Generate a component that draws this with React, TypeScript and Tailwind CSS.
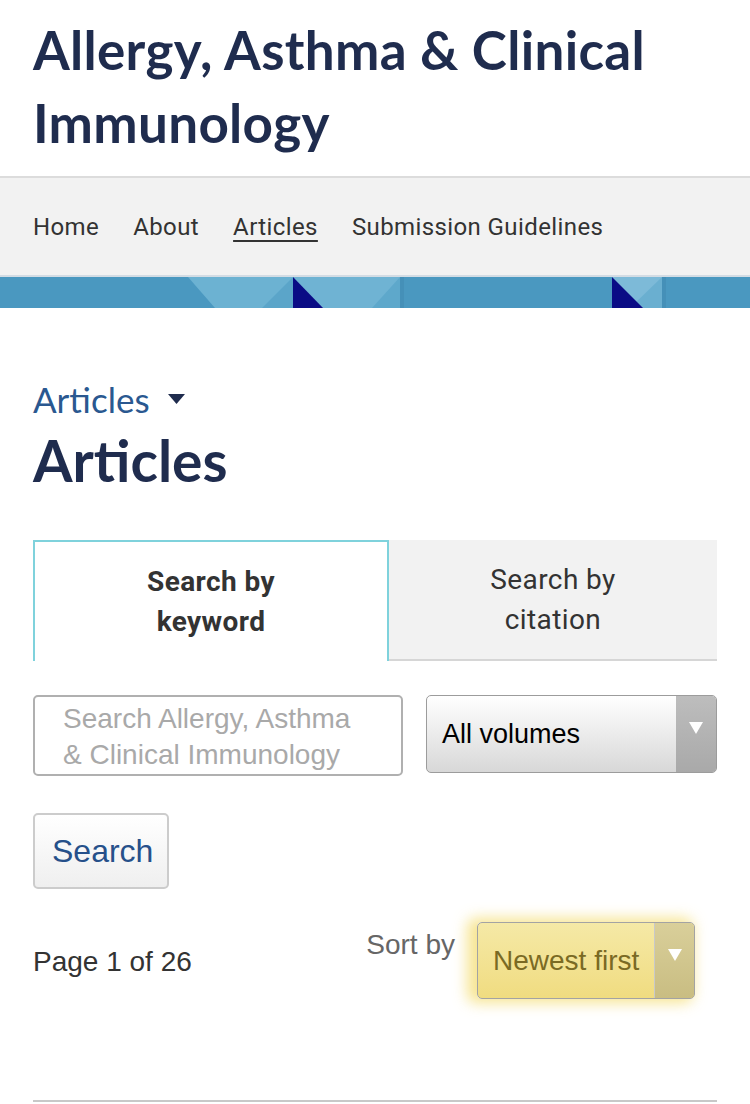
import { useState } from "react";

const navLinks = ["Home", "About", "Articles", "Submission Guidelines"];

// decorative stripe under the nav
const Stripe = () => (
    <svg className="block w-full h-[31px]" viewBox="0 0 750 31" preserveAspectRatio="none">
        <rect x="0" y="0" width="750" height="31" fill="#4a98c0" />
        <polygon points="188,0 293,0 293,31 215,31" fill="#6cb2d2" />
        <polygon points="262,31 293,0 293,31" fill="#5ba5c9" />
        <polygon points="293,0 400,0 400,31 293,31" fill="#6fb3d3" />
        <polygon points="400,0 400,31 372,31" fill="#5ea8cb" />
        <rect x="400" y="0" width="4" height="31" fill="#4590b8" />
        <polygon points="293,0 323,31 293,31" fill="#0a0c85" />
        <polygon points="612,0 662,0 662,31 612,31" fill="#7dbad8" />
        <polygon points="662,0 662,31 630,31" fill="#6aafd0" />
        <rect x="662" y="0" width="4" height="31" fill="#4590b8" />
        <polygon points="612,0 643,31 612,31" fill="#0a0c85" />
    </svg>
);

const SelectBox = ({ label, highlighted }: { label: string; highlighted?: boolean }) => (
    <div
        className={
            highlighted
                ? "relative flex items-stretch h-[77px] w-[218px] rounded-[5px] border border-[#a3a3a3] bg-gradient-to-b from-[#f5e9a6] to-[#f0dc80] shadow-[-6px_0_14px_4px_rgba(245,222,120,0.8)] overflow-hidden"
                : "relative flex items-stretch h-[78px] flex-1 rounded-[5px] border border-[#9c9c9c] bg-gradient-to-b from-white to-[#d8d8d8] overflow-hidden"
        }
    >
        <div
            className={
                highlighted
                    ? "flex-1 flex items-center pl-[15px] text-[28px] text-[#7a6a24]"
                    : "flex-1 flex items-center pl-[15px] text-[27px] text-black"
            }
            style={{ fontFamily: '"Liberation Sans", Arial, sans-serif' }}
        >
            {label}
        </div>
        <div
            className={
                highlighted
                    ? "w-[40px] flex items-start justify-center pt-[26px] bg-gradient-to-b from-[#d9cf9a] to-[#c9bd82] border-l border-[#c9c9c9]"
                    : "w-[40px] flex items-start justify-center pt-[26px] bg-gradient-to-b from-[#bdbdbd] to-[#a9a9a9]"
            }
        >
            <svg width="14" height="12" viewBox="0 0 14 12">
                <polygon points="0,0 14,0 7,12" fill="#ffffff" />
            </svg>
        </div>
    </div>
);

export default function App() {
    const [tab, setTab] = useState<"keyword" | "citation">("keyword");

    return (
        <div className="w-[750px] min-h-[1104px] bg-white" style={{ fontFamily: 'Lato, "Noto Sans", sans-serif' }}>
            {/* Journal title */}
            <header className="h-[176px] px-[33px] pt-[13px]">
                <h1 className="text-[53px] leading-[73px] font-bold text-[#1f2c4e] tracking-[0.3px]">
                    Allergy, Asthma &amp; Clinical Immunology
                </h1>
            </header>
            <div className="h-[2px] bg-[#dcdcdc]"></div>

            {/* Navigation */}
            <nav
                className="h-[97px] bg-[#f2f2f2] flex items-center px-[33px] gap-[34px] text-[24px] tracking-[0.4px] text-[#333333]"
                style={{ fontFamily: 'Roboto, "Noto Sans", sans-serif' }}
            >
                {navLinks.map((l) => (
                    <a
                        key={l}
                        href="#"
                        className={l === "Articles" ? "underline underline-offset-[5px] decoration-[2px]" : ""}
                    >
                        {l}
                    </a>
                ))}
            </nav>
            <div className="h-[2px] bg-[#d3dce4]"></div>
            <Stripe />

            <main className="px-[33px]">
                <div className="pt-[71px] flex items-center gap-[18px] text-[35px] leading-[40px] text-[#2a5890]">
                    <span>Articles</span>
                    <svg width="17" height="10" viewBox="0 0 17 10">
                        <polygon points="0,0 17,0 8.5,10" fill="#1f2c4e" />
                    </svg>
                </div>
                <h2 className="mt-[9px] text-[57px] leading-[64px] font-bold text-[#1f2c4e]">Articles</h2>

                {/* Tabs */}
                <div
                    className="mt-[48px] flex h-[121px] text-[28px] leading-[40px] tracking-[0.4px] text-[#333333]"
                    style={{ fontFamily: 'Roboto, "Noto Sans", sans-serif' }}
                >
                    <button
                        onClick={() => setTab("keyword")}
                        className={
                            tab === "keyword"
                                ? "w-[356px] border-t-2 border-x-2 border-[#7fd2dc] bg-white font-bold flex flex-col items-center justify-center"
                                : "w-[356px] bg-[#f2f2f2] border-b-2 border-[#d6d6d6] flex flex-col items-center justify-center"
                        }
                    >
                        <span>Search by</span>
                        <span>keyword</span>
                    </button>
                    <button
                        onClick={() => setTab("citation")}
                        className={
                            tab === "citation"
                                ? "flex-1 border-t-2 border-x-2 border-[#7fd2dc] bg-white font-bold flex flex-col items-center justify-center"
                                : "flex-1 bg-[#f2f2f2] border-b-2 border-[#d6d6d6] flex flex-col items-center justify-center"
                        }
                    >
                        <span>Search by</span>
                        <span>citation</span>
                    </button>
                </div>

                {/* Search form */}
                <div className="mt-[34px] flex gap-[23px]">
                    <div
                        className="w-[370px] h-[81px] rounded-[5px] border-2 border-[#b0b0b0] pl-[28px] pt-[4px] text-[28px] leading-[36px] text-[#a9a9a9]"
                        style={{ fontFamily: '"Liberation Sans", Arial, sans-serif' }}
                    >
                        Search Allergy, Asthma
                        <br />
                        &amp; Clinical Immunology
                    </div>
                    <SelectBox label="All volumes" />
                </div>

                <button
                    className="mt-[37px] w-[136px] h-[76px] rounded-[5px] border-2 border-[#cccccc] bg-gradient-to-b from-white to-[#efefef] text-[32px] text-[#26508a] text-left pl-[17px]"
                    style={{ fontFamily: '"Liberation Sans", Arial, sans-serif' }}
                >
                    Search
                </button>

                {/* Pagination / sort */}
                <div
                    className="mt-[33px] flex items-start text-[28px]"
                    style={{ fontFamily: '"Liberation Sans", Arial, sans-serif' }}
                >
                    <span className="mt-[19px] text-[#333333]">Page 1 of 26</span>
                    <span className="ml-auto mr-[22px] mt-[2px] text-[#666666]">Sort by</span>
                    <div className="mr-[22px]">
                        <SelectBox label="Newest first" highlighted />
                    </div>
                </div>

                <div className="mt-[101px] h-[2px] bg-[#c8c8c8]"></div>
            </main>
        </div>
    );
}
